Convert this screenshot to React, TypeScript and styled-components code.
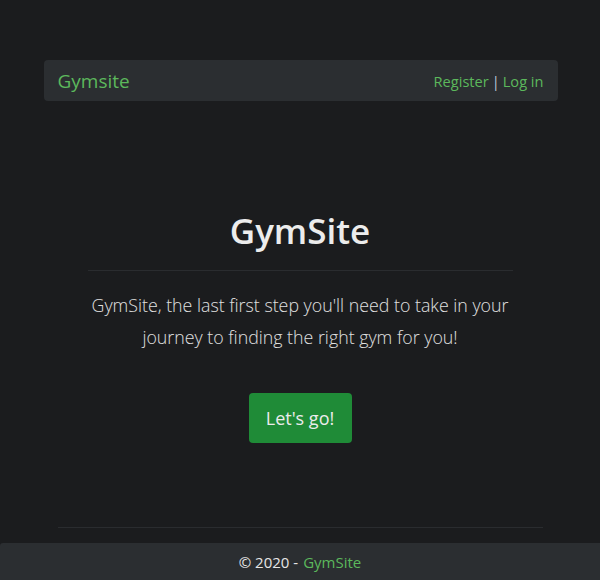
import React from "react";
import styled, { createGlobalStyle } from "styled-components";

const Global = createGlobalStyle`
  html, body { margin: 0; padding: 0; background: #1b1c1e; }
  body { font-family: "Open Sans", "Noto Sans", sans-serif; color: #e6e6e6; }
  #root { min-height: 580px; }
`;

const Page = styled.div`
  min-height: 580px;
  display: flex;
  flex-direction: column;
  align-items: center;
  box-sizing: border-box;
  padding-top: 60px;
`;

const Navbar = styled.nav`
  width: 514px;
  height: 41px;
  box-sizing: border-box;
  background: #2b2e31;
  border-radius: 4px;
  display: flex;
  align-items: center;
  justify-content: space-between;
  padding: 0 14px;
  margin-left: 1px;
`;

const Brand = styled.a`
  color: #5cb85c;
  font-size: 19px;
  text-decoration: none;
`;

const NavLinks = styled.div`
  display: flex;
  align-items: center;
  font-size: 14.6px;
  color: #5cb85c;
`;

const NavLink = styled.a`
  color: #5cb85c;
  text-decoration: none;
`;

const Sep = styled.span`
  color: #b8c4d6;
  margin: 0 3px;
`;

const Hero = styled.main`
  width: 514px;
  display: flex;
  flex-direction: column;
  align-items: center;
  margin-top: 107px;
  flex: 1;
`;

const Title = styled.h1`
  margin: 0;
  padding-top: 2px;
  font-size: 35px;
  font-weight: 600;
  line-height: 42px;
  color: #ececec;
`;

const Rule = styled.hr<{ $width: number }>`
  width: ${(p) => p.$width}px;
  border: 0;
  border-top: 1px solid #2a2c2f;
  margin: 0;
`;

const TitleRule = styled(Rule)`
  margin-top: 18px;
`;

const Lead = styled.p`
  margin: 18px 0 0;
  text-align: center;
  font-size: 17.8px;
  font-weight: 300;
  line-height: 32px;
  color: #e0e0e0;
  width: 480px;
`;

const Button = styled.a`
  margin-top: 40px;
  width: 103px;
  height: 50px;
  box-sizing: border-box;
  display: flex;
  align-items: center;
  justify-content: center;
  background: #1f8b37;
  border-radius: 4px;
  color: #ececec;
  font-size: 18px;
  text-decoration: none;
`;

const BottomRule = styled(Rule)`
  margin-top: auto;
  margin-bottom: 15px;
`;

const Footer = styled.footer`
  width: 100%;
  height: 37px;
  background: #2b2e31;
  border-top-left-radius: 3px;
  display: flex;
  align-items: center;
  justify-content: center;
  font-size: 15px;
  color: #e6e6e6;
`;

const FooterLink = styled.a`
  color: #5cb85c;
  text-decoration: none;
  margin-left: 5px;
`;

export default function App() {
  return (
    <>
      <Global />
      <Page>
        <Navbar>
          <Brand href="#">Gymsite</Brand>
          <NavLinks>
            <NavLink href="#">Register</NavLink>
            <Sep>|</Sep>
            <NavLink href="#">Log in</NavLink>
          </NavLinks>
        </Navbar>
        <Hero>
          <Title>GymSite</Title>
          <TitleRule $width={425} />
          <Lead>
            GymSite, the last first step you'll need to take in your journey to finding the right gym for you!
          </Lead>
          <Button href="#">Let's go!</Button>
          <BottomRule $width={485} />
        </Hero>
        <Footer>
          © 2020 -<FooterLink href="#">GymSite</FooterLink>
        </Footer>
      </Page>
    </>
  );
}
